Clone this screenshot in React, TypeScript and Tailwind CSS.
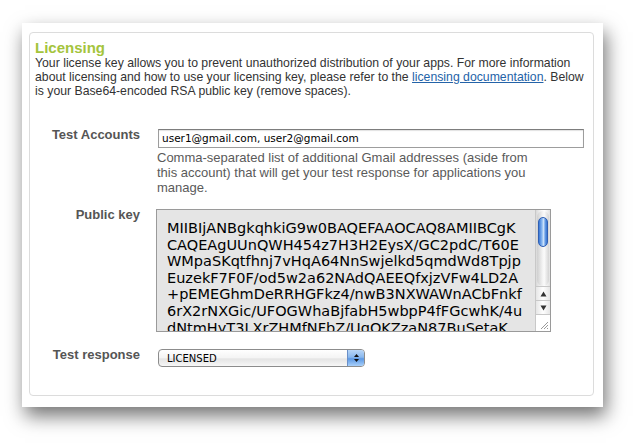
import React from "react";

const keyLines = [
  "MIIBIjANBgkqhkiG9w0BAQEFAAOCAQ8AMIIBCgK",
  "CAQEAgUUnQWH454z7H3H2EysX/GC2pdC/T60E",
  "WMpaSKqtfhnj7vHqA64NnSwjelkd5qmdWd8Tpjp",
  "EuzekF7F0F/od5w2a62NAdQAEEQfxjzVFw4LD2A",
  "+pEMEGhmDeRRHGFkz4/nwB3NXWAWnACbFnkf",
  "6rX2rNXGic/UFOGWhaBjfabH5wbpP4fFGcwhK/4u",
  "dNtmHyT3LXrZHMfNFbZ/UqOKZzaN87BuSetaK",
  "Qm9cT2x0L8aP1QwEr7YbAc3kVnZs0uD5gTfIDAQAB",
];

export default function App() {
  return (
    <div
      className="w-[638px] h-[443px] bg-white pl-[22px] pt-[23px] overflow-hidden"
      style={{ fontFamily: '"Liberation Sans", Arial, sans-serif' }}
    >
      <div className="w-[581px] h-[384px] bg-white shadow-[3px_9px_18px_rgba(0,0,0,0.55)] pl-[7px] pt-[9px] pr-[9px] pb-[11px]">
        <div className="w-full h-full border border-[#dcdcdc] rounded-[4px] pl-[5px] pt-[6px]">
          <div className="text-[15px] leading-[17px] font-bold text-[#a4c43c]">Licensing</div>
          <div className="text-[12.25px] leading-[14px] text-[#333]">
            <div className="whitespace-nowrap">
              Your license key allows you to prevent unauthorized distribution of your apps. For more information
            </div>
            <div className="whitespace-nowrap">
              about licensing and how to use your licensing key, please refer to the{" "}
              <span className="text-[#2463a8] underline">licensing documentation</span>. Below
            </div>
            <div className="whitespace-nowrap">is your Base64-encoded RSA public key (remove spaces).</div>
          </div>

          {/* Test Accounts */}
          <div className="flex items-start mt-[30px]">
            <div className="w-[105px] text-right text-[13px] leading-[14px] font-bold text-[#555]">Test Accounts</div>
            <div className="ml-[18px] flex flex-col">
              <div
                className="mt-[1px] w-[426px] h-[19px] border border-[#9d9d9d] border-t-[#7d7d7d] bg-white shadow-[inset_0_1px_1px_rgba(0,0,0,0.12)] flex items-center pl-[3px] text-[10.5px] text-black"
                style={{ fontFamily: '"DejaVu Sans", sans-serif' }}
              >
                user1@gmail.com, user2@gmail.com
              </div>
              <div className="-ml-[1px] mt-[2px] text-[13px] leading-[15px] text-[#5a5a5a]">
                <div className="whitespace-nowrap">Comma-separated list of additional Gmail addresses (aside from</div>
                <div className="whitespace-nowrap">this account) that will get your test response for applications you</div>
                <div className="whitespace-nowrap">manage.</div>
              </div>
            </div>
          </div>

          {/* Public key */}
          <div className="flex items-start mt-[13px]">
            <div className="w-[105px] text-right text-[13px] leading-[14px] font-bold text-[#555]">Public key</div>
            <div className="ml-[16px] mt-[1px] w-[395px] h-[123px] border border-[#9a9a9a] bg-[#e5e5e5] flex overflow-hidden">
              <div
                className="flex-1 overflow-hidden pl-[10px] pt-[10px] text-[14.5px] leading-[16.6px] text-black"
                style={{ fontFamily: '"DejaVu Sans", sans-serif' }}
              >
                {keyLines.map((l, i) => (
                  <div key={i} className="whitespace-nowrap">
                    {l}
                  </div>
                ))}
              </div>
              <div className="w-[15px] flex flex-col bg-white border-l border-[#c8c8c8]">
                <div className="h-[76px] px-[1px] pt-[1px] bg-[linear-gradient(90deg,#d9d9d9,#f7f7f7_40%,#ffffff_60%,#e2e2e2)]">
                  <div className="h-full rounded-b-[6px] rounded-t-[6px] bg-[linear-gradient(90deg,#cfcfcf,#f2f2f2_45%,#fbfbfb_60%,#d4d4d4)] pt-[6px] px-[1px]">
                    <div className="h-[30px] rounded-full border border-[#2f5fb3] bg-[linear-gradient(90deg,#3a78d6,#8fbcf2_40%,#cfe4fb_55%,#5f97e3_80%,#3a74cf)]" />
                  </div>
                </div>
                <div className="h-[14px] border-t border-[#c8c8c8] bg-[linear-gradient(90deg,#e6e6e6,#ffffff_50%,#e6e6e6)] flex items-center justify-center">
                  <svg width="7" height="6" viewBox="0 0 7 6">
                    <path d="M3.5 0.5 L6.5 5.5 L0.5 5.5 Z" fill="#333" />
                  </svg>
                </div>
                <div className="h-[14px] border-t border-[#c8c8c8] bg-[linear-gradient(90deg,#e6e6e6,#ffffff_50%,#e6e6e6)] flex items-center justify-center">
                  <svg width="7" height="6" viewBox="0 0 7 6">
                    <path d="M0.5 0.5 L6.5 0.5 L3.5 5.5 Z" fill="#333" />
                  </svg>
                </div>
                <div className="flex-1 border-t border-[#c8c8c8] bg-white flex items-end justify-end pr-[1px] pb-[1px]">
                  <svg width="10" height="10" viewBox="0 0 10 10">
                    <path d="M9 2 L2 9 M9 5 L5 9 M9 8 L8 9" stroke="#9a9a9a" strokeWidth="1" />
                  </svg>
                </div>
              </div>
            </div>
          </div>

          {/* Test response */}
          <div className="flex items-start mt-[16px]">
            <div className="w-[105px] text-right text-[13px] leading-[14px] font-bold text-[#555]">Test response</div>
            <div className="ml-[18px] mt-[1px] w-[207px] h-[18px] rounded-[4px] border border-[#8c8c8c] flex overflow-hidden bg-[linear-gradient(180deg,#ffffff,#f4f4f4_50%,#e4e4e4_55%,#f7f7f7)]">
              <div
                className="flex-1 flex items-center pl-[8px] text-[10px] text-black"
                style={{ fontFamily: '"DejaVu Sans", sans-serif' }}
              >
                LICENSED
              </div>
              <div className="w-[17px] border-l border-[#6a8fc8] bg-[linear-gradient(180deg,#b9d6f7,#8ab8ee_45%,#5c98e4_55%,#a9d0fa)] flex flex-col items-center justify-center gap-[2px]">
                <svg width="5" height="3" viewBox="0 0 5 3">
                  <path d="M2.5 0 L5 3 L0 3 Z" fill="#111" />
                </svg>
                <svg width="5" height="3" viewBox="0 0 5 3">
                  <path d="M0 0 L5 0 L2.5 3 Z" fill="#111" />
                </svg>
              </div>
            </div>
          </div>
        </div>
      </div>
    </div>
  );
}
